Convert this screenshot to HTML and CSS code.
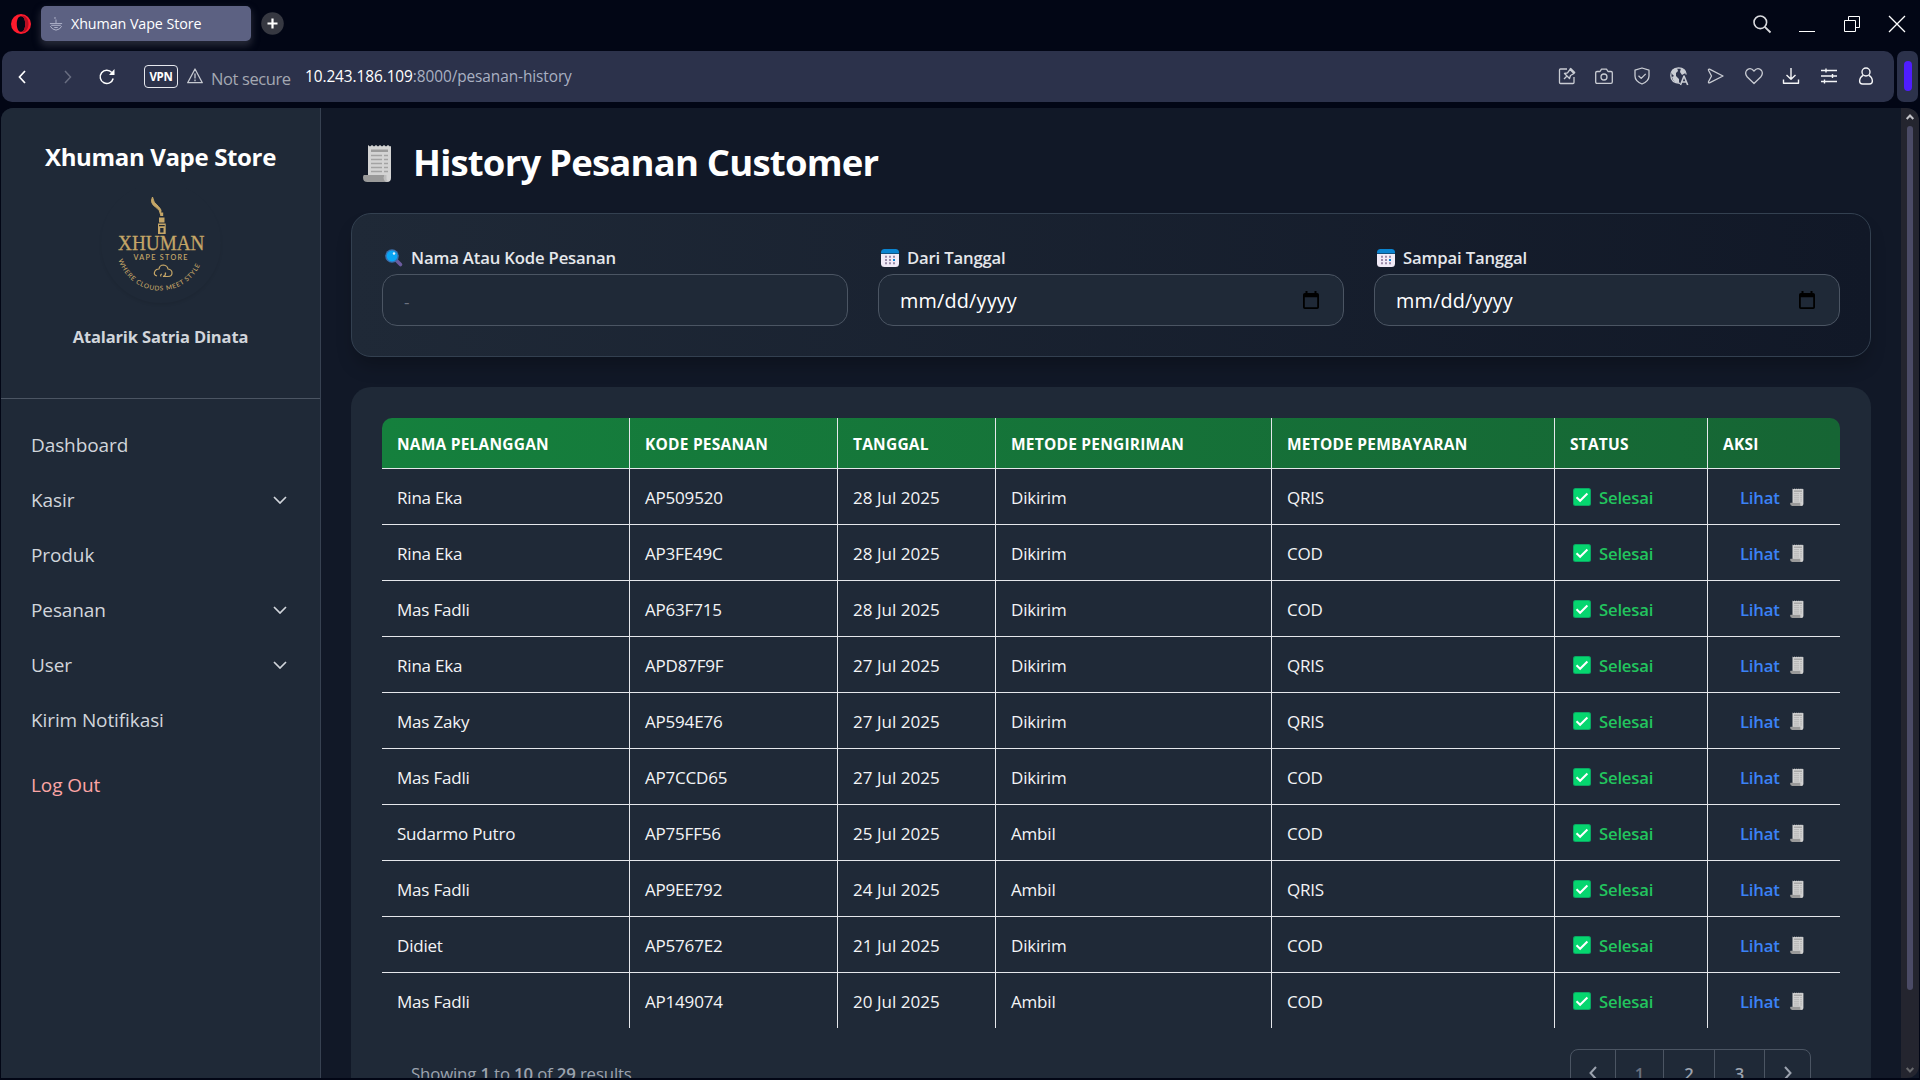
FILE: index.html
```html
<!DOCTYPE html>
<html lang="id">
<head>
<meta charset="utf-8">
<title>Xhuman Vape Store</title>
<link rel="stylesheet" href="styles.css">
</head>
<body>
<svg class="defs" aria-hidden="true">
  <symbol id="receipt" viewBox="0 0 29 38">
    <path d="M5 1l2 1.500 2-1.500 2 1.500 2-1.500 2 1.500 2-1.500 2 1.500 2-1.500 2 1.500 2-1.500 2 1.500 1-.5V34q0 4-4 4H9L5 31z" fill="#d3d3d3"/>
    <path d="M8 5.500h17v2.500H8z" fill="#9b9b9b"/>
    <path d="M8 11.500h11M21 11.500h4M8 15.500h11M21 15.500h4M8 19.500h11M21 19.500h4M8 23.500h11M21 23.500h4M8 27.500h11M21 27.500h4" stroke="#a3a3a3" stroke-width="1.300"/>
    <path d="M1 31h20.500v3q0 4 3 4H4.500Q0 38 0 33.500 0 31 1 31z" fill="#9a9a9a"/>
    <path d="M21.500 31h2v4q0 2 2 2-2 1-3 .5-2-1-2-4z" fill="#bdbdbd"/>
  </symbol>
  <symbol id="check" viewBox="0 0 18 18">
    <rect width="18" height="18" rx="2.500" fill="#0aa763"/>
    <rect x="1" y="1" width="16" height="16" rx="1.500" fill="#06d66f"/>
    <path d="M3.500 9.300l3.600 3.500L14.400 5.500" fill="none" stroke="#fff" stroke-width="2"/>
  </symbol>
  <symbol id="month" viewBox="0 0 18 18">
    <path d="M0 5h18v9.500q0 3.500-3.500 3.500h-11Q0 18 0 14.500z" fill="#f1ebf7"/>
    <path d="M0 4.500V3.500Q0 0 3.500 0h11Q18 0 18 3.500v1z" fill="#0a84d0"/>
    <path d="M4 6.700h2v2H4zM8 6.700h2v2H8zM12 6.700h2v2h-2zM4 10h2v2H4zM8 10h2v2H8zM4 13.300h2v2H4zM8 13.300h2v2H8zM12 13.300h2v2h-2z" fill="#9a8aa8"/>
    <path d="M12 10h2v2h-2z" fill="#0a84d0"/>
  </symbol>
  <symbol id="picker" viewBox="0 0 16 18">
    <path d="M2.500 0h2v2h7V0h2v2h.7Q16 2 16 3.800v12.400Q16 18 14.200 18H1.800Q0 18 0 16.200V3.800Q0 2 1.800 2h.7zM1.800 6.300v9.900h12.400V6.300z" fill="#000"/>
  </symbol>
  <symbol id="down" viewBox="0 0 14 8"><path d="M1 1l6 6 6-6" fill="none" stroke="#d1d5db" stroke-width="1.700"/></symbol>
</svg>

<header class="tabs">
  <svg class="opera" viewBox="0 0 20 20"><path fill-rule="evenodd" fill="#ff1b2d" d="M10 0a10 10 0 1 0 0 20a10 10 0 1 0 0-20zM10 2.200c2.800 0 4.200 3.600 4.200 7.800s-1.400 7.800-4.200 7.800S5.800 14.200 5.800 10 7.200 2.200 10 2.200z"/><path fill="#b40e22" d="M10 2.200q2.300-1 4.500.5 3 2.600 3 7.300t-3 7.300q-2.200 1.500-4.500.5c2.800 0 4.200-3.600 4.200-7.800S12.800 2.200 10 2.200z"/></svg>
  <div class="tab">
    <svg class="favicon" viewBox="0 0 16 16" fill="none" stroke="#b9bdd2" stroke-width="1"><path d="M7 0q-1 1.500.500 2.500M8 3v4M1 7.500h14M2.500 9.500h11M1.500 10.500q2 4 6.500 4.500 4.500-.5 6.500-4.500M6 12h4"/></svg>
    <span class="tab-title">Xhuman Vape Store</span>
  </div>
  <svg class="plus" viewBox="0 0 23 23"><circle cx="11.500" cy="11.500" r="11.300" fill="#363841"/><path d="M6.500 11.500h10M11.500 6.500v10" stroke="#fff" stroke-width="2.200"/></svg>
  <div class="window">
    <svg width="18" height="18" viewBox="0 0 18 18" fill="none" stroke="#d9dade"><circle cx="7.300" cy="7.300" r="6.300" stroke-width="1.600"/><path d="M11.800 11.800L17.500 17.500" stroke-width="1.800"/></svg>
    <svg width="16" height="18" viewBox="0 0 16 18"><path d="M0 16.500h16" stroke="#fff"/></svg>
    <svg width="16" height="18" viewBox="0 0 16 18" fill="none" stroke="#fff"><path d="M.5 5.500h11v11H.5zM4.500 5.500v-4h11v11h-4"/></svg>
    <svg width="16" height="18" viewBox="0 0 16 18" stroke="#fff" stroke-width="1.300"><path d="M0 1l16 16M16 1L0 17"/></svg>
  </div>
</header>

<div class="toolbar">
  <div class="address">
    <svg class="back" viewBox="0 0 8 14"><path d="M7 1L1.500 7 7 13" fill="none" stroke="#fff" stroke-width="1.700"/></svg>
    <svg class="forward" viewBox="0 0 8 14"><path d="M1 1l5.500 6L1 13" fill="none" stroke="#686d80" stroke-width="1.500"/></svg>
    <svg class="reload" viewBox="0 0 16 16"><path d="M14.200 9.500A6.600 6.600 0 1 1 12.800 3.500" fill="none" stroke="#fff" stroke-width="1.500"/><path d="M15.500 0v6H10z" fill="#fff"/></svg>
    <span class="vpn">VPN</span>
    <svg class="warn" viewBox="0 0 16 16" fill="none" stroke="#c6c9d0" stroke-width="1.300" stroke-linejoin="round"><path d="M8 1L15.300 14.700H.7zM8 5.500v5M8 11.500v1.700"/></svg>
    <span class="insecure">Not secure</span>
    <span class="url"><b>10.243.186.109</b>:8000/pesanan-history</span>
    <div class="tools">
      <svg viewBox="0 0 18 18"><path d="M9 2H2.500Q1.500 2 1.500 3v12.500q0 1 1 1H15q1 0 1-1V10M6 12l3.300-3.300M6.500 6.500l5 5 1-3 3.500-2-4-4-2.500 3.300zM11.700 2.500l1-1 4 4-1 1"/></svg>
      <svg viewBox="0 0 18 18"><path d="M2 4.500h3l1.500-2.300h5L13 4.500h3q1.300 0 1.300 1.300V15q0 1.300-1.300 1.300H2Q.7 16.300.7 15V5.800Q.7 4.500 2 4.500z"/><circle cx="9" cy="10" r="3"/></svg>
      <svg viewBox="0 0 18 18"><path d="M9 1l7 2.200V9q0 5-7 8Q2 14 2 9V3.200zM5.500 8.800l2.700 2.600 4.500-4.500"/></svg>
      <svg viewBox="0 0 18 18"><path d="M10 16.300Q1 16 .8 8.500 1 1.200 8.500.8 15.700 1 16.200 7.500"/><path d="M2 4q2-3 5-3l1 3-2 2v3l3 3v4Q5 16 3 13l-1-3 2-1-2-2zM11 1q4 1.500 4.500 5L12 8 10 5z" fill="#c9ccd3" stroke="none"/><path d="M10.500 18l3.500-9 3.700 9M12 15h4.200" stroke-width="1.600"/></svg>
      <svg viewBox="0 0 18 18"><path d="M2.500 2.200L16 9 2.500 15.800Q1 16 1.600 14.500L4.500 9 1.600 3.500Q1 2 2.500 2.200z"/></svg>
      <svg viewBox="0 0 18 18"><path d="M9 16.500L2.300 10Q-.5 6.500 1.500 3.500 5-.5 9 4q4-4.500 7.500-.5 2 3-.8 6.500z"/></svg>
      <svg viewBox="0 0 18 18" class="bright"><path d="M9 1v11M4.500 8L9 12.300 13.500 8M1.500 12.500v3.800h15v-3.800"/></svg>
      <svg viewBox="0 0 18 18" class="bright"><path d="M1 3.500h16M1 9h16M1 14.500h16M6 1.500v4M12.500 7v4M4.500 12.500v4"/></svg>
      <svg viewBox="0 0 18 18" class="bright"><circle cx="9" cy="5" r="4"/><path d="M6.200 8.300Q2.800 10 2.600 14q0 3 3 3h6.800q3 0 3-3-.2-4-3.600-5.700"/></svg>
    </div>
  </div>
  <div class="side-toggle"><i></i></div>
</div>

<div class="page">
  <aside class="sidebar">
    <div class="brand">
      <h2>Xhuman Vape Store</h2>
      <svg class="logo" viewBox="0 0 120 120" fill="#c5a667">
        <path id="arc" d="M17.500 77A43.800 43.800 0 0 0 101 77" fill="none"/>
        <path d="M51.500 14q-3 6 3 10 5 3 5 7.500 2-5-2-8-5.500-4-6-9.500z" stroke="#c5a667" stroke-width="1"/>
        <path d="M59.200 29.500h3v3.500h-3zM58 34.500h5.500v5H58zM57 40.500h7.700V51H57zM58 42v1.300h5.700V42zM59.200 45v4.500h3.300V45z" fill-rule="evenodd"/>
        <text class="logo-name" x="17" y="67" textLength="86.500" lengthAdjust="spacingAndGlyphs">XHUMAN</text>
        <text class="logo-sub" x="32.500" y="76.700" textLength="54">VAPE STORE</text>
        <text class="logo-arc"><textPath href="#arc" textLength="105">WHERE CLOUDS MEET STYLE</textPath></text>
        <path d="M56 93q-4-1-2-5 1-2 4-2 .5-4 4.500-4 4 .5 4.500 4 4 .5 4 4 0 3.500-4 3.500h-5q3-1 2.500-4M60 93.500q-1-2 1-2.500" fill="none" stroke="#c5a667" stroke-width="1.200"/>
      </svg>
      <p>Atalarik Satria Dinata</p>
    </div>
    <nav class="menu">
      <a>Dashboard</a>
      <a>Kasir<svg><use href="#down"/></svg></a>
      <a>Produk</a>
      <a>Pesanan<svg><use href="#down"/></svg></a>
      <a>User<svg><use href="#down"/></svg></a>
      <a>Kirim Notifikasi</a>
      <a class="logout">Log Out</a>
    </nav>
  </aside>

  <main class="content">
    <h1><svg><use href="#receipt"/></svg><span>History Pesanan Customer</span></h1>

    <section class="filters">
      <div class="field">
        <label><svg viewBox="0 0 18 18"><path d="M11 11l4.500 4.500" stroke="#6b5b9e" stroke-width="3.600" stroke-linecap="round"/><circle cx="7" cy="7" r="6.800" fill="#3b6fae"/><circle cx="7" cy="7" r="5.400" fill="#0aa5f3"/><circle cx="9" cy="4.500" r="1.200" fill="#e6f6ff"/></svg><span>Nama Atau Kode Pesanan</span></label>
        <div class="box placeholder">-</div>
      </div>
      <div class="field">
        <label><svg><use href="#month"/></svg><span>Dari Tanggal</span></label>
        <div class="box"><span>mm/dd/yyyy</span><svg><use href="#picker"/></svg></div>
      </div>
      <div class="field">
        <label><svg><use href="#month"/></svg><span>Sampai Tanggal</span></label>
        <div class="box"><span>mm/dd/yyyy</span><svg><use href="#picker"/></svg></div>
      </div>
    </section>

    <section class="orders">
      <table>
        <colgroup><col class="c1"><col class="c2"><col class="c3"><col class="c4"><col class="c5"><col class="c6"><col class="c7"></colgroup>
        <thead><tr><th>Nama Pelanggan</th><th>Kode Pesanan</th><th>Tanggal</th><th>Metode Pengiriman</th><th>Metode Pembayaran</th><th>Status</th><th>Aksi</th></tr></thead>
        <tbody>
          <tr><td>Rina Eka</td><td>AP509520</td><td>28 Jul 2025</td><td>Dikirim</td><td>QRIS</td><td><span class="done"><svg><use href="#check"/></svg>Selesai</span></td><td><a class="view">Lihat<svg><use href="#receipt"/></svg></a></td></tr>
          <tr><td>Rina Eka</td><td>AP3FE49C</td><td>28 Jul 2025</td><td>Dikirim</td><td>COD</td><td><span class="done"><svg><use href="#check"/></svg>Selesai</span></td><td><a class="view">Lihat<svg><use href="#receipt"/></svg></a></td></tr>
          <tr><td>Mas Fadli</td><td>AP63F715</td><td>28 Jul 2025</td><td>Dikirim</td><td>COD</td><td><span class="done"><svg><use href="#check"/></svg>Selesai</span></td><td><a class="view">Lihat<svg><use href="#receipt"/></svg></a></td></tr>
          <tr><td>Rina Eka</td><td>APD87F9F</td><td>27 Jul 2025</td><td>Dikirim</td><td>QRIS</td><td><span class="done"><svg><use href="#check"/></svg>Selesai</span></td><td><a class="view">Lihat<svg><use href="#receipt"/></svg></a></td></tr>
          <tr><td>Mas Zaky</td><td>AP594E76</td><td>27 Jul 2025</td><td>Dikirim</td><td>QRIS</td><td><span class="done"><svg><use href="#check"/></svg>Selesai</span></td><td><a class="view">Lihat<svg><use href="#receipt"/></svg></a></td></tr>
          <tr><td>Mas Fadli</td><td>AP7CCD65</td><td>27 Jul 2025</td><td>Dikirim</td><td>COD</td><td><span class="done"><svg><use href="#check"/></svg>Selesai</span></td><td><a class="view">Lihat<svg><use href="#receipt"/></svg></a></td></tr>
          <tr><td>Sudarmo Putro</td><td>AP75FF56</td><td>25 Jul 2025</td><td>Ambil</td><td>COD</td><td><span class="done"><svg><use href="#check"/></svg>Selesai</span></td><td><a class="view">Lihat<svg><use href="#receipt"/></svg></a></td></tr>
          <tr><td>Mas Fadli</td><td>AP9EE792</td><td>24 Jul 2025</td><td>Ambil</td><td>QRIS</td><td><span class="done"><svg><use href="#check"/></svg>Selesai</span></td><td><a class="view">Lihat<svg><use href="#receipt"/></svg></a></td></tr>
          <tr><td>Didiet</td><td>AP5767E2</td><td>21 Jul 2025</td><td>Dikirim</td><td>COD</td><td><span class="done"><svg><use href="#check"/></svg>Selesai</span></td><td><a class="view">Lihat<svg><use href="#receipt"/></svg></a></td></tr>
          <tr><td>Mas Fadli</td><td>AP149074</td><td>20 Jul 2025</td><td>Ambil</td><td>COD</td><td><span class="done"><svg><use href="#check"/></svg>Selesai</span></td><td><a class="view">Lihat<svg><use href="#receipt"/></svg></a></td></tr>
        </tbody>
      </table>
      <div class="paging">
        <p>Showing <b>1</b> to <b>10</b> of <b>29</b> results</p>
        <div class="pages">
          <span class="p-prev"><svg viewBox="0 0 8 14"><path d="M7 1L1.500 7 7 13"/></svg></span>
          <span class="p1">1</span><span class="p2">2</span><span class="p3">3</span>
          <span class="p-next"><svg viewBox="0 0 8 14"><path d="M1 1l5.500 6L1 13"/></svg></span>
        </div>
      </div>
    </section>
  </main>

  <div class="scrollbar">
    <svg viewBox="0 0 8 6"><path d="M.7 5L4 1.500 7.300 5" stroke="#c3c3c8"/></svg>
    <i></i>
    <svg viewBox="0 0 8 6"><path d="M.7 1L4 4.500 7.300 1" stroke="#68696d"/></svg>
  </div>
</div>
</body>
</html>
```

FILE: styles.css
```css
* { box-sizing: border-box; margin: 0; padding: 0; }
body {
  width: 1920px; height: 1080px; overflow: hidden;
  background: #020615; color: #fff;
  font-family: "Open Sans", "Noto Sans", sans-serif;
  display: flex; flex-direction: column;
}
svg { display: block; flex: none; overflow: visible; }
.defs { width: 0; height: 0; position: absolute; }

/* browser tabs */
.tabs { height: 51px; flex: none; display: flex; align-items: flex-start; padding: 6px 15px 0 11px; }
.opera { width: 20px; height: 20px; margin: 8px 10px 0 0; }
.tab { width: 210px; height: 35px; background: #5c6182; border-radius: 5px; display: flex; align-items: center; padding: 0 8px; box-shadow: 0 4px 7px 1px #252836; }
.favicon { width: 14px; height: 16px; margin-right: 8px; }
.tab-title { font-size: 14.300px; letter-spacing: -.08px; white-space: nowrap; }
.plus { width: 23px; height: 23px; margin: 6px 0 0 10px; }
.window { margin-left: auto; padding-top: 9px; display: flex; gap: 29px; }
.window svg:first-child { margin-right: -1px; }

/* address bar */
.toolbar { height: 51px; flex: none; display: flex; gap: 3px; padding-left: 2px; margin-bottom: 6px; }
.address { width: 1892px; background: #2c324b; border-radius: 10px; display: flex; align-items: center; padding: 0 19px 0 16px; }
.back { width: 8px; height: 14px; }
.forward { width: 8px; height: 14px; margin-left: 38px; }
.reload { width: 16px; height: 16px; margin-left: 27px; }
.vpn { width: 34px; height: 23px; margin-left: 29px; border: 1.5px solid #e6e8ee; border-radius: 4px; font-size: 11.500px; font-weight: 700; line-height: 21px; text-align: center; letter-spacing: -.3px; }
.warn { width: 16px; height: 16px; margin: -2px 0 0 9px; }
.insecure { width: 94px; margin-left: 8px; padding-top: 3px; font-size: 16.500px; letter-spacing: -.4px; color: #a4a8b2; white-space: nowrap; }
.url { font-size: 15.400px; letter-spacing: -.08px; color: #a9b0c2; white-space: nowrap; }
.url b { font-weight: 400; color: #fff; }
.tools { margin: -1px 0 0 auto; display: flex; gap: 19.400px; }
.tools svg { width: 18px; height: 18px; fill: none; stroke: #c9ccd3; stroke-width: 1.300; stroke-linejoin: round; }
.tools .bright { stroke: #f4f5f7; stroke-width: 1.400; }
.side-toggle { width: 21px; background: #2c324b; border-radius: 7px; padding: 10px 7px 0; }
.side-toggle i { display: block; width: 8px; height: 30px; border-radius: 4px; background: #4f1dff; }

/* page area */
.page { height: 970px; margin: 0 1px; background: #111827; border-radius: 12px 12px 0 0; overflow: hidden; display: flex; }
.sidebar { width: 320px; flex: none; background: #1f2937; border-right: 1px solid #374151; }
.brand { height: 291px; border-bottom: 1px solid #4b5563; display: flex; flex-direction: column; align-items: center; padding-top: 32px; }
.brand h2 { font-size: 24px; line-height: 34px; font-weight: 700; letter-spacing: -.35px; }
.logo { width: 120px; height: 120px; margin-top: 9px; border-radius: 50%; box-shadow: 0 2px 3px rgba(0,0,0,.07); }
.logo-name { font: 400 22px "Liberation Serif", serif; stroke: #c5a667; stroke-width: .3px; }
.logo-sub { font: 600 7.200px Lato, sans-serif; }
.logo-arc { font: 500 6.500px Lato, sans-serif; }
.brand p { margin-top: 21px; font-size: 16.500px; line-height: 26px; font-weight: 700; color: #d1d5db; letter-spacing: -.15px; }
.menu { padding: 18px 33px 0 30px; }
.menu a { height: 55px; display: flex; align-items: center; justify-content: space-between; font-size: 19px; letter-spacing: -.1px; color: #d1d5db; }
.menu svg { width: 14px; height: 8px; }
.menu .logout { margin-top: 10px; color: #fca5a5; }

.content { width: 1580px; padding: 30px 30px 0; }
h1 { height: 50px; padding-left: 12px; display: flex; align-items: center; font-size: 36.500px; line-height: 50px; letter-spacing: -.8px; font-weight: 700; }
h1 svg { width: 29px; height: 38px; margin: 0 21px 0 0; }
h1 span { margin-top: -2px; }
.filters { height: 144px; margin-top: 25px; padding: 30px; border: 1px solid #334050; border-radius: 20px; background: linear-gradient(to right, #1f2937, #111827); box-shadow: 0 12px 18px -4px rgba(0,0,0,.25); display: grid; grid-template-columns: repeat(3, 466px); gap: 30px; }
.field label { height: 30px; padding-bottom: 3px; display: flex; align-items: center; font-size: 16.700px; font-weight: 600; letter-spacing: -.17px; color: #e5e7eb; }
.field label svg { width: 18px; height: 18px; margin: 0 8px 0 3px; }
.box { width: 466px; height: 52px; border: 1px solid #4b5563; border-radius: 15px; background: #1f2937; display: flex; align-items: center; justify-content: space-between; padding: 0 24px 0 21px; font-size: 19.800px; letter-spacing: .2px; }
.box span { padding-top: 1px; }
.box svg { width: 16px; height: 18px; }
.placeholder { color: #6b7280; font-size: 17px; padding-top: 2px; }

.orders { height: 760px; margin-top: 30px; padding: 31px 31px 0; background: #1f2937; border-radius: 20px; }
table { width: 1458px; table-layout: fixed; border-collapse: separate; border-spacing: 0; overflow: hidden; border-radius: 10px 10px 0 0; }
.c1 { width: 248px; } .c2 { width: 208px; } .c3 { width: 158px; } .c4 { width: 276px; } .c5 { width: 283px; } .c6 { width: 153px; } .c7 { width: 132px; }
thead tr { background: linear-gradient(to right, #15803d, #166534); }
th, td { border-right: 1px solid #e5e7eb; border-bottom: 1px solid #e5e7eb; padding: 0 15px; text-align: left; white-space: nowrap; }
th:last-child, td:last-child { border-right: 0; }
tbody tr:last-child td { border-bottom: 0; }
th { height: 51px; padding-top: 1px; font-size: 15.500px; font-weight: 700; text-transform: uppercase; letter-spacing: .22px; }
td { height: 56px; padding-top: 1px; font-size: 17px; letter-spacing: -.2px; color: #f3f4f6; }
tbody tr:last-child td { height: 55px; padding-top: 1px; }
td:nth-child(3) { letter-spacing: .03px; }
.done { display: flex; align-items: center; gap: 8px; padding-left: 3px; font-size: 16.700px; font-weight: 600; color: #22c55e; }
.done svg { width: 18px; height: 18px; }
.view { display: flex; align-items: center; gap: 10px; padding-left: 17px; font-size: 16.700px; font-weight: 600; color: #3b82f6; }
.view svg { width: 14px; height: 18px; }

.paging { display: flex; justify-content: space-between; padding: 21px 29px 0 29px; }
.paging p { padding-top: 13px; font-size: 16.800px; line-height: 24px; letter-spacing: -.15px; color: #9ca3af; white-space: nowrap; }
.paging b { font-weight: 600; }
.pages { height: 48px; display: flex; border: 1px solid #4b5563; border-radius: 8px; font-size: 16.500px; font-weight: 600; color: #9ca3af; }
.pages span { display: flex; align-items: center; justify-content: center; border-right: 1px solid #4b5563; }
.pages span:last-child { border: 0; }
.pages svg { width: 8px; height: 14px; fill: none; stroke: #9ca3af; stroke-width: 2; }
.pages .p-prev { width: 45px; } .p1 { width: 48px; color: #6b7280; } .p2 { width: 51px; } .p3 { width: 50px; } .p-next { width: 45px; }

.scrollbar { width: 18px; flex: none; background: #24252f; border-radius: 0 12px 12px 0; display: flex; flex-direction: column; align-items: center; padding-top: 6px; }
.scrollbar svg { width: 8px; height: 6px; fill: none; stroke-width: 2; }
.scrollbar i { width: 6px; height: 864px; border-radius: 3px; background: #4b4b66; margin: 6px 0 77px; }
```
